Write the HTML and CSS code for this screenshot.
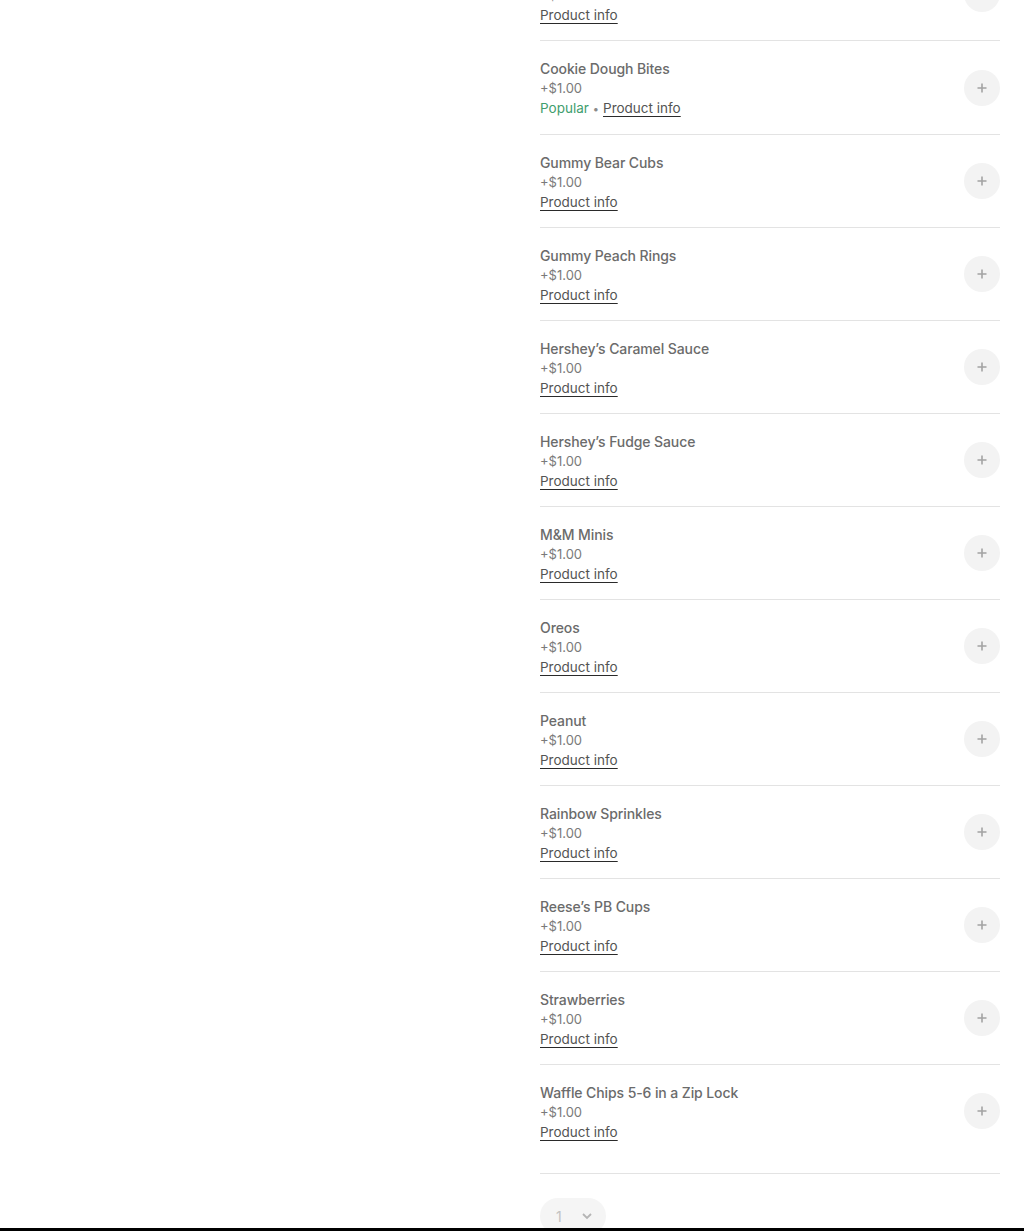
FILE: index.html
```html
<!DOCTYPE html>
<html lang="en">
<head>
  <meta charset="UTF-8">
  <title>Toppings</title>
  <link rel="stylesheet" href="styles.css">
</head>
<body>
  <div class="page">
    <div class="side"></div>
    <section class="options">
      <div class="option-list">
        <div class="option">
          <div class="option-text">
            <div class="option-name">Brownie Bites</div>
            <div class="option-price">+$1.00</div>
            <div class="option-meta"><a href="#" class="info-link">Product info</a></div>
          </div>
          <button class="add-btn" aria-label="Add"><svg width="12" height="12" viewBox="0 0 12 12"><path d="M6 1.5v9M1.5 6h9" stroke="currentColor" stroke-width="1.6"/></svg></button>
        </div>
        <div class="option">
          <div class="option-text">
            <div class="option-name">Cookie Dough Bites</div>
            <div class="option-price">+$1.00</div>
            <div class="option-meta"><span class="popular">Popular</span><span class="dot">•</span><a href="#" class="info-link">Product info</a></div>
          </div>
          <button class="add-btn" aria-label="Add"><svg width="12" height="12" viewBox="0 0 12 12"><path d="M6 1.5v9M1.5 6h9" stroke="currentColor" stroke-width="1.6"/></svg></button>
        </div>
        <div class="option">
          <div class="option-text">
            <div class="option-name">Gummy Bear Cubs</div>
            <div class="option-price">+$1.00</div>
            <div class="option-meta"><a href="#" class="info-link">Product info</a></div>
          </div>
          <button class="add-btn" aria-label="Add"><svg width="12" height="12" viewBox="0 0 12 12"><path d="M6 1.5v9M1.5 6h9" stroke="currentColor" stroke-width="1.6"/></svg></button>
        </div>
        <div class="option">
          <div class="option-text">
            <div class="option-name">Gummy Peach Rings</div>
            <div class="option-price">+$1.00</div>
            <div class="option-meta"><a href="#" class="info-link">Product info</a></div>
          </div>
          <button class="add-btn" aria-label="Add"><svg width="12" height="12" viewBox="0 0 12 12"><path d="M6 1.5v9M1.5 6h9" stroke="currentColor" stroke-width="1.6"/></svg></button>
        </div>
        <div class="option">
          <div class="option-text">
            <div class="option-name">Hershey’s Caramel Sauce</div>
            <div class="option-price">+$1.00</div>
            <div class="option-meta"><a href="#" class="info-link">Product info</a></div>
          </div>
          <button class="add-btn" aria-label="Add"><svg width="12" height="12" viewBox="0 0 12 12"><path d="M6 1.5v9M1.5 6h9" stroke="currentColor" stroke-width="1.6"/></svg></button>
        </div>
        <div class="option">
          <div class="option-text">
            <div class="option-name">Hershey’s Fudge Sauce</div>
            <div class="option-price">+$1.00</div>
            <div class="option-meta"><a href="#" class="info-link">Product info</a></div>
          </div>
          <button class="add-btn" aria-label="Add"><svg width="12" height="12" viewBox="0 0 12 12"><path d="M6 1.5v9M1.5 6h9" stroke="currentColor" stroke-width="1.6"/></svg></button>
        </div>
        <div class="option">
          <div class="option-text">
            <div class="option-name">M&amp;M Minis</div>
            <div class="option-price">+$1.00</div>
            <div class="option-meta"><a href="#" class="info-link">Product info</a></div>
          </div>
          <button class="add-btn" aria-label="Add"><svg width="12" height="12" viewBox="0 0 12 12"><path d="M6 1.5v9M1.5 6h9" stroke="currentColor" stroke-width="1.6"/></svg></button>
        </div>
        <div class="option">
          <div class="option-text">
            <div class="option-name">Oreos</div>
            <div class="option-price">+$1.00</div>
            <div class="option-meta"><a href="#" class="info-link">Product info</a></div>
          </div>
          <button class="add-btn" aria-label="Add"><svg width="12" height="12" viewBox="0 0 12 12"><path d="M6 1.5v9M1.5 6h9" stroke="currentColor" stroke-width="1.6"/></svg></button>
        </div>
        <div class="option">
          <div class="option-text">
            <div class="option-name">Peanut</div>
            <div class="option-price">+$1.00</div>
            <div class="option-meta"><a href="#" class="info-link">Product info</a></div>
          </div>
          <button class="add-btn" aria-label="Add"><svg width="12" height="12" viewBox="0 0 12 12"><path d="M6 1.5v9M1.5 6h9" stroke="currentColor" stroke-width="1.6"/></svg></button>
        </div>
        <div class="option">
          <div class="option-text">
            <div class="option-name">Rainbow Sprinkles</div>
            <div class="option-price">+$1.00</div>
            <div class="option-meta"><a href="#" class="info-link">Product info</a></div>
          </div>
          <button class="add-btn" aria-label="Add"><svg width="12" height="12" viewBox="0 0 12 12"><path d="M6 1.5v9M1.5 6h9" stroke="currentColor" stroke-width="1.6"/></svg></button>
        </div>
        <div class="option">
          <div class="option-text">
            <div class="option-name">Reese’s PB Cups</div>
            <div class="option-price">+$1.00</div>
            <div class="option-meta"><a href="#" class="info-link">Product info</a></div>
          </div>
          <button class="add-btn" aria-label="Add"><svg width="12" height="12" viewBox="0 0 12 12"><path d="M6 1.5v9M1.5 6h9" stroke="currentColor" stroke-width="1.6"/></svg></button>
        </div>
        <div class="option">
          <div class="option-text">
            <div class="option-name">Strawberries</div>
            <div class="option-price">+$1.00</div>
            <div class="option-meta"><a href="#" class="info-link">Product info</a></div>
          </div>
          <button class="add-btn" aria-label="Add"><svg width="12" height="12" viewBox="0 0 12 12"><path d="M6 1.5v9M1.5 6h9" stroke="currentColor" stroke-width="1.6"/></svg></button>
        </div>
        <div class="option last">
          <div class="option-text">
            <div class="option-name">Waffle Chips 5-6 in a Zip Lock</div>
            <div class="option-price">+$1.00</div>
            <div class="option-meta"><a href="#" class="info-link">Product info</a></div>
          </div>
          <button class="add-btn" aria-label="Add"><svg width="12" height="12" viewBox="0 0 12 12"><path d="M6 1.5v9M1.5 6h9" stroke="currentColor" stroke-width="1.6"/></svg></button>
        </div>
      </div>

      <div class="qty">
        <span class="qty-num">1</span>
        <svg width="14" height="14" viewBox="0 0 14 14"><path d="M3 5l4 4 4-4" fill="none" stroke="currentColor" stroke-width="1.8"/></svg>
      </div>
    </section>
  </div>
  <div class="bottom-bar"></div>
</body>
</html>
```

FILE: styles.css
```css
body {
  margin: 0;
  background: #ffffff;
  font-family: Inter, "Open Sans", Arial, sans-serif;
  overflow: hidden;
}

.page {
  display: grid;
  grid-template-columns: 540px 460px;
}

/* list is scrolled: first row partly hidden */
.options {
  margin-top: -52px;
}

.option {
  display: flex;
  align-items: center;
  justify-content: space-between;
  padding: 18px 0 14px;
  border-bottom: 1px solid #e3e3e3;
}

.option.last {
  padding-bottom: 30px;
}

.option-name {
  font-size: 14px;
  font-weight: 500;
  line-height: 20px;
  color: #6b6b6b;
  letter-spacing: -0.1px;
}

.option-price {
  font-size: 13px;
  line-height: 18px;
  color: #7a7a7a;
}

.option-meta {
  font-size: 13.5px;
  line-height: 22px;
  color: #7a7a7a;
}

.info-link {
  color: #545454;
  text-decoration: underline;
  text-decoration-color: #2a2a2a;
  text-underline-offset: 3px;
}

.popular {
  color: #3f9e6e;
}

.dot {
  color: #8a8a8a;
  font-size: 11px;
  margin: 0 4px;
}

.add-btn {
  width: 36px;
  height: 36px;
  margin-bottom: 4px;
  border: none;
  border-radius: 50%;
  background: #f3f3f3;
  color: #a3a3a3;
  display: flex;
  align-items: center;
  justify-content: center;
  padding: 0;
}

.qty {
  margin-top: 24px;
  width: 66px;
  height: 36px;
  border-radius: 18px;
  background: #f5f5f5;
  display: flex;
  align-items: center;
  gap: 18px;
  padding-left: 16px;
  box-sizing: border-box;
  color: #b5b5b5;
}

.qty-num {
  font-size: 14px;
  color: #c2c2c2;
}

.bottom-bar {
  position: fixed;
  left: 0;
  right: 0;
  bottom: 0;
  height: 3px;
  background: #000000;
}
```
